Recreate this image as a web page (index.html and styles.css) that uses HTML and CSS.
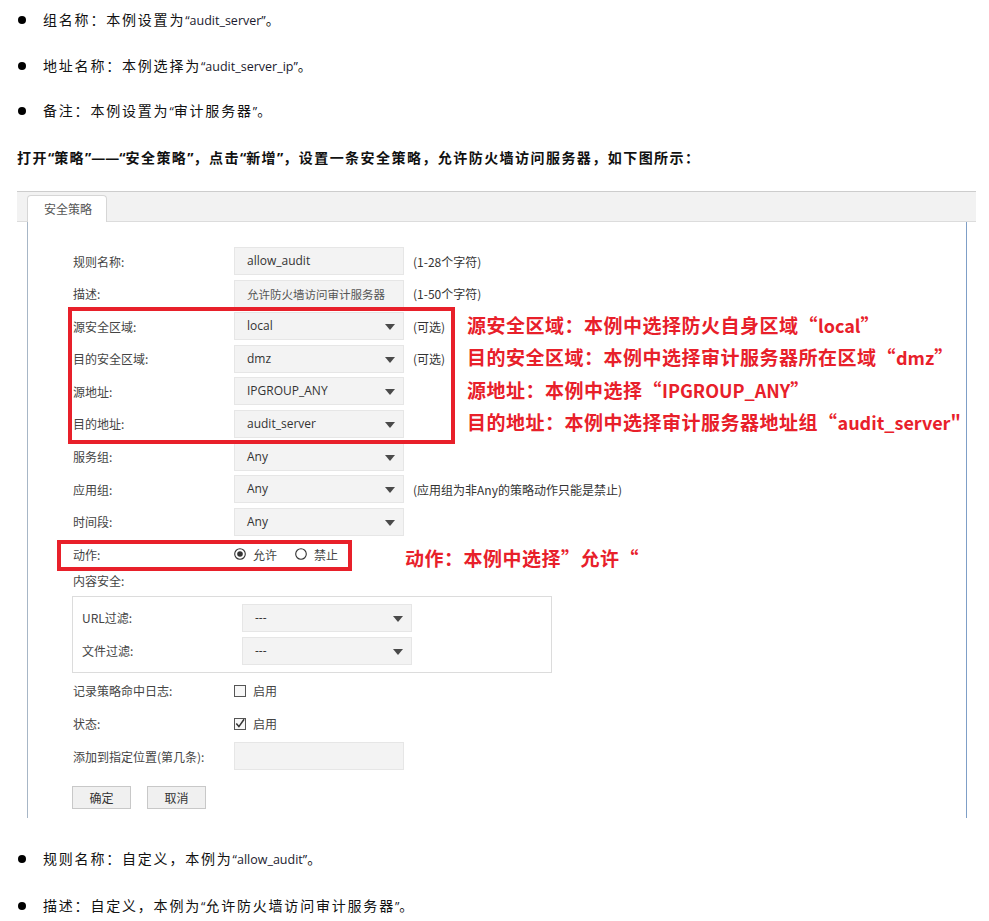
FILE: index.html
```html
<!DOCTYPE html>
<html lang="zh-CN">
<head>
<meta charset="utf-8">
<title>安全策略</title>
<link rel="stylesheet" href="styles.css">
</head>
<body>
<div class="doc">
  <p class="item"><span class="dot"></span><span class="txt">组名称：本例设置为<span class="en">“audit_server”</span>。</span></p>
  <p class="item"><span class="dot"></span><span class="txt">地址名称：本例选择为<span class="en">“audit_server_ip”</span>。</span></p>
  <p class="item"><span class="dot"></span><span class="txt">备注：本例设置为<span class="en">“</span>审计服务器<span class="en">”</span>。</span></p>
  <p class="heading">打开<span class="q">“</span>策略<span class="q">”——“</span>安全策略<span class="q">”</span>，点击<span class="q">“</span>新增<span class="q">”</span>，设置一条安全策略，允许防火墙访问服务器，如下图所示：</p>

  <div class="window">
    <div class="tabbar"><div class="tab">安全策略</div></div>
    <div class="panel">
      <div class="row"><span class="label">规则名称:</span><span class="field">allow_audit</span><span class="hint">(1-28个字符)</span></div>
      <div class="row"><span class="label">描述:</span><span class="field small">允许防火墙访问审计服务器</span><span class="hint">(1-50个字符)</span></div>
      <div class="row"><span class="label">源安全区域:</span><span class="field select">local<svg class="arrow" viewBox="0 0 10 6"><path d="M0 0h10L5 6z"/></svg></span><span class="hint">(可选)</span></div>
      <div class="row"><span class="label">目的安全区域:</span><span class="field select">dmz<svg class="arrow" viewBox="0 0 10 6"><path d="M0 0h10L5 6z"/></svg></span><span class="hint">(可选)</span></div>
      <div class="row"><span class="label">源地址:</span><span class="field select">IPGROUP_ANY<svg class="arrow" viewBox="0 0 10 6"><path d="M0 0h10L5 6z"/></svg></span></div>
      <div class="row"><span class="label">目的地址:</span><span class="field select">audit_server<svg class="arrow" viewBox="0 0 10 6"><path d="M0 0h10L5 6z"/></svg></span></div>
      <div class="row"><span class="label">服务组:</span><span class="field select">Any<svg class="arrow" viewBox="0 0 10 6"><path d="M0 0h10L5 6z"/></svg></span></div>
      <div class="row"><span class="label">应用组:</span><span class="field select">Any<svg class="arrow" viewBox="0 0 10 6"><path d="M0 0h10L5 6z"/></svg></span><span class="hint">(应用组为非Any的策略动作只能是禁止)</span></div>
      <div class="row"><span class="label">时间段:</span><span class="field select">Any<svg class="arrow" viewBox="0 0 10 6"><path d="M0 0h10L5 6z"/></svg></span></div>
      <div class="row"><span class="label">动作:</span>
        <span class="opt"><svg class="radio" viewBox="0 0 12 12"><circle cx="6" cy="6" r="5.3" fill="#fff" stroke="#333" stroke-width="1.1"/><circle cx="6" cy="6" r="2.8" fill="#333"/></svg>允许</span>
        <span class="opt second"><svg class="radio" viewBox="0 0 12 12"><circle cx="6" cy="6" r="5.3" fill="#fff" stroke="#333" stroke-width="1.1"/></svg>禁止</span>
      </div>
      <div class="section-title">内容安全:</div>
      <div class="subbox">
        <div class="row tight"><span class="label sub">URL过滤:</span><span class="field select">---<svg class="arrow" viewBox="0 0 10 6"><path d="M0 0h10L5 6z"/></svg></span></div>
        <div class="row tight last"><span class="label sub">文件过滤:</span><span class="field select">---<svg class="arrow" viewBox="0 0 10 6"><path d="M0 0h10L5 6z"/></svg></span></div>
      </div>
      <div class="row"><span class="label">记录策略命中日志:</span><span class="opt"><svg class="check" viewBox="0 0 12 12"><rect x="0.5" y="0.5" width="11" height="11" fill="#f7f7f7" stroke="#555"/></svg>启用</span></div>
      <div class="row"><span class="label">状态:</span><span class="opt"><svg class="check" viewBox="0 0 12 12"><rect x="0.5" y="0.5" width="11" height="11" fill="#f7f7f7" stroke="#555"/><path d="M2.3 5.6l2.6 3 5.2-7.4" fill="none" stroke="#333" stroke-width="1.5"/></svg>启用</span></div>
      <div class="row"><span class="label">添加到指定位置(第几条):</span><span class="field"></span></div>
      <div class="buttons"><span class="btn">确定</span><span class="btn">取消</span></div>

      <div class="mark mark-a"></div>
      <div class="mark mark-b"></div>
      <div class="note note-a">
        <span>源安全区域：本例中选择防火自身区域“<span class="lat">local</span>”</span>
        <span>目的安全区域：本例中选择审计服务器所在区域“<span class="lat">dmz</span>”</span>
        <span>源地址：本例中选择“<span class="lat">IPGROUP_ANY</span>”</span>
        <span>目的地址：本例中选择审计服务器地址组“<span class="lat">audit_server"</span></span>
      </div>
      <div class="note note-b">动作：本例中选择”允许“</div>
    </div>
  </div>

  <p class="item after"><span class="dot"></span><span class="txt">规则名称：自定义，本例为<span class="en">“allow_audit”</span>。</span></p>
  <p class="item"><span class="dot"></span><span class="txt">描述：自定义，本例为<span class="en">“</span>允许防火墙访问审计服务器<span class="en">”</span>。</span></p>
</div>
</body>
</html>
```
FILE: styles.css
```css
html, body {
  margin: 0;
  padding: 0;
  background: #fff;
}
.doc {
  padding-top: 8px;
  font-family: "Noto Sans CJK SC", sans-serif;
  color: #111;
}
.item {
  margin: 0 0 21.5px 0;
  display: flex;
  align-items: center;
  height: 24px;
  font-size: 14px;
  line-height: 24px;
  letter-spacing: 1.8px;
}
.item .dot {
  width: 8px;
  height: 8px;
  border-radius: 50%;
  background: #000;
  margin-left: 18px;
  margin-right: 17px;
  flex: none;
}
.item .en {
  font-family: "Open Sans", sans-serif;
  font-size: 12.5px;
  letter-spacing: 0;
  color: #1a1a2e;
}
.item.after {
  margin-top: 29px;
  margin-bottom: 23px;
}
.heading {
  margin: 0;
  padding-left: 17px;
  height: 24px;
  line-height: 24px;
  font-size: 14px;
  font-weight: bold;
  letter-spacing: 1.45px;
  color: #111;
}
.heading .q {
  font-family: "Open Sans", sans-serif;
  letter-spacing: 0;
}

.window {
  margin: 22.5px 0 0 17px;
  width: 959px;
}
.tabbar {
  display: flex;
  align-items: flex-end;
  height: 29px;
  padding-left: 10px;
  background: #f2f2f2;
  border-top: 1px solid #cdcdcd;
  border-bottom: 1px solid #dcdcdc;
}
.tab {
  box-sizing: content-box;
  width: 62px;
  height: 26px;
  margin-bottom: -1px;
  padding-left: 16px;
  background: #fff;
  border: 1px solid #d6d6d6;
  border-bottom: none;
  border-radius: 4px 4px 0 0;
  font-size: 12px;
  color: #555;
  line-height: 25px;
}
.panel {
  position: relative;
  margin-left: 10px;
  width: 893px;
  padding: 25px 0 9px 45px;
  border-left: 1px solid #a7b6c6;
  border-right: 1px solid #7f9fc7;
  font-size: 12px;
  color: #444;
}
.row {
  display: flex;
  align-items: center;
  height: 28px;
  margin-bottom: 4.6px;
}
.label {
  width: 161px;
  flex: none;
  color: #444;
}
.label.sub {
  width: 160px;
}
.field {
  position: relative;
  box-sizing: border-box;
  width: 170px;
  height: 28px;
  flex: none;
  background: #f3f3f3;
  border: 1px solid #e6e6e6;
  padding-left: 12px;
  line-height: 26px;
  font-family: "Open Sans", "Noto Sans CJK SC", sans-serif;
  font-size: 12px;
  color: #333;
}
.field.small {
  font-family: "Noto Sans CJK SC", sans-serif;
  font-size: 11.5px;
  color: #555;
}
.arrow {
  position: absolute;
  right: 8px;
  top: 11px;
  width: 10px;
  height: 6px;
  fill: #4a4a4a;
}
.hint {
  margin-left: 9px;
  color: #333;
}
.opt {
  display: flex;
  align-items: center;
  color: #444;
}
.opt.second {
  margin-left: 18px;
}
.radio, .check {
  width: 12px;
  height: 12px;
  margin-right: 7px;
}
.section-title {
  height: 16px;
  line-height: 16px;
  margin-bottom: 7px;
  color: #444;
}
.subbox {
  margin-left: -1px;
  width: 469px;
  padding: 7px 0 7px 9px;
  border: 1px solid #dcdcdc;
  margin-bottom: 4px;
}
.row.tight {
  margin-bottom: 5px;
}
.row.tight.last {
  margin-bottom: 0;
}
.buttons {
  display: flex;
  gap: 16px;
  margin: 15.8px 0 0 -1px;
}
.btn {
  box-sizing: border-box;
  width: 59px;
  height: 23px;
  line-height: 21px;
  text-align: center;
  background: #f0f0f0;
  border: 1px solid #c8c8c8;
  color: #333;
}

.mark {
  position: absolute;
  border: 4px solid #e8202a;
  box-sizing: border-box;
}
.mark-a {
  left: 40px;
  top: 85px;
  width: 387px;
  height: 137px;
}
.mark-b {
  left: 29px;
  top: 318px;
  width: 295px;
  height: 31px;
}
.note {
  position: absolute;
  font-family: "Noto Sans CJK SC", sans-serif;
  font-weight: bold;
  font-size: 19px;
  letter-spacing: 0.5px;
  color: #e8202a;
  white-space: nowrap;
}
.note .lat {
  letter-spacing: 0;
  font-size: 18px;
}
.note-a {
  left: 439px;
  top: 87px;
  display: flex;
  flex-direction: column;
  line-height: 32.4px;
}
.note-b {
  left: 377px;
  top: 320px;
  line-height: 32px;
}
```
